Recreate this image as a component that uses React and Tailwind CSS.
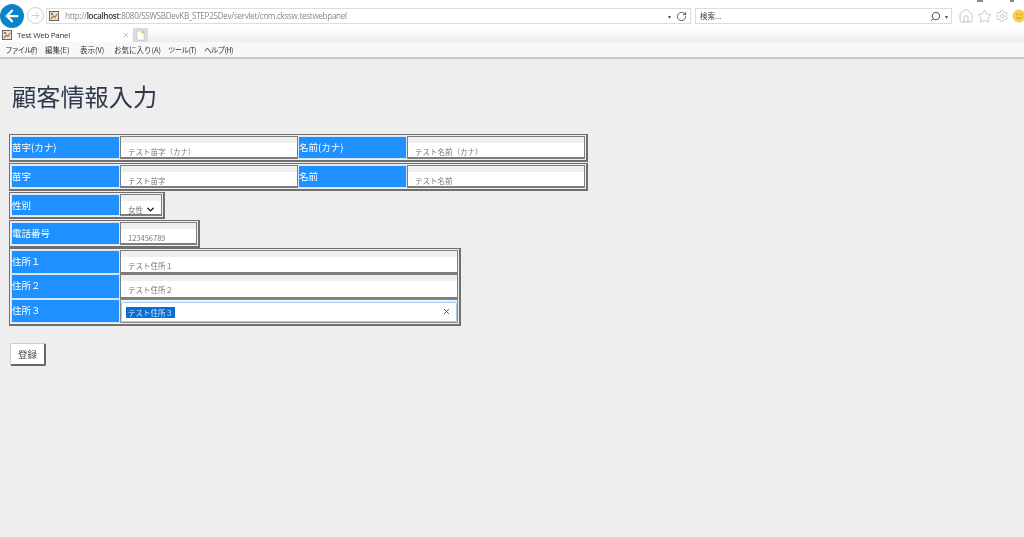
import React from "react";
import { ArrowLeft, ArrowRight, RotateCw, Search, Home, Star, Settings, X, ChevronDown } from "lucide-react";

const font = { fontFamily: '"Noto Sans CJK JP", "Noto Sans", sans-serif' };

function Favicon({ className = "" }) {
  return (
    <svg viewBox="0 0 10 10" className={`w-[10px] h-[10px] shrink-0 ${className}`}>
      <rect x="0.5" y="0.5" width="9" height="9" fill="#e8e4dc" stroke="#666" />
      <path d="M2 8 L4.5 5 L6 6.5 L8 3" fill="none" stroke="#c8742a" strokeWidth="1.3" />
      <rect x="2" y="2" width="2" height="2" fill="#777" />
    </svg>
  );
}

function Label({ children }) {
  return (
    <div className="w-[109px] shrink-0 h-full border border-[#d6e6f6] bg-[#1e90ff] text-white text-[9.5px] leading-[18px] pt-[1px]">
      {children}
    </div>
  );
}

function Input({ children, className = "" }) {
  return (
    <div className={`h-full border border-[#7d7d7d] border-b-2 flex flex-col bg-white ${className}`}>
      <div className="h-[6px] shrink-0 bg-[#efefef]" />
      <div className="flex-1 pl-[7px] pt-[3px] text-[7.5px] leading-[11px] text-[#777] whitespace-nowrap">{children}</div>
    </div>
  );
}

function Box({ className = "", children }) {
  return (
    <div className={`border border-[#6f6f6f] border-r-2 border-b-2 p-[1px] flex ${className}`}>{children}</div>
  );
}

const menu = [
  ["ファイル(F)", "w-[40px] tracking-[-1.1px]"],
  ["編集(E)", "w-[35px]"],
  ["表示(V)", "w-[34px]"],
  ["お気に入り(A)", "w-[54px]"],
  ["ツール(T)", "w-[36px] tracking-[-0.7px]"],
  ["ヘルプ(H)", "w-[40px] tracking-[-0.7px]"],
];

export default function App() {
  return (
    <div className="relative w-[1024px] h-[537px] overflow-hidden bg-[#eeeeee] flex flex-col blur-[0.35px]" style={font}>
      {/* window-control fragments at the very top edge */}
      <div className="absolute top-0 left-[977px] w-[6px] h-[2px] bg-[#888]" />
      <div className="absolute top-0 left-[1010px] w-[4px] h-[2px] bg-[#888]" />

      {/* address row */}
      <div className="h-[28px] shrink-0 bg-white flex items-center">
        <div className="w-[24px] h-[24px] rounded-full bg-[#0a84c6] flex items-center justify-center shrink-0 mt-[3px]">
          <ArrowLeft size={18} strokeWidth={3} color="#fff" />
        </div>
        <div className="w-[17px] h-[17px] ml-[3px] mt-[3px] rounded-full border border-[#cfcfcf] flex items-center justify-center shrink-0">
          <ArrowRight size={11} strokeWidth={1.5} color="#bbb" />
        </div>
        <div className="ml-[2px] mt-[4px] w-[645px] h-[16px] border border-[#dcdcdc] flex items-center pl-[2px] pr-[2px] shrink-0">
          <Favicon />
          <div className="ml-[6px] flex-1 text-[8.1px] tracking-[-0.3px] text-[#888] whitespace-nowrap" style={{ fontFamily: '"Open Sans", sans-serif' }}>
            http://<span className="text-[#333] font-semibold">localhost</span>:8080/SSWSBDevKB_STEP25Dev/servlet/com.ckssw.testwebpanel
          </div>
          <span className="text-[#555] text-[6px] mr-[5px]">▾</span>
          <RotateCw size={11} strokeWidth={1.8} color="#444" className="mr-[1px]" />
        </div>
        <div className="ml-[4px] mt-[4px] w-[257px] h-[16px] border border-[#dcdcdc] flex items-center pl-[4px] pr-[3px] shrink-0">
          <div className="flex-1 text-[7.5px] text-[#444]">検索...</div>
          <Search size={11} strokeWidth={2} color="#444" className="-scale-x-100 mr-[4px]" />
          <span className="text-[#555] text-[6px]">▾</span>
        </div>
        <div className="ml-[6px] mt-[4px] flex items-center gap-[3px] shrink-0">
          <Home size={16} strokeWidth={1} color="#a8a8a8" />
          <Star size={15} strokeWidth={1} color="#a8a8a8" />
          <Settings size={14} strokeWidth={1} color="#a8a8a8" />
          <svg viewBox="0 0 14 14" className="w-[14px] h-[14px]">
            <circle cx="7" cy="7" r="6.5" fill="#f4cf4e" />
            <circle cx="5" cy="5.5" r="0.7" fill="#b08a20" />
            <circle cx="9" cy="5.5" r="0.7" fill="#b08a20" />
            <path d="M4 8.5 Q7 11 10 8.5" fill="none" stroke="#b08a20" strokeWidth="0.7" />
          </svg>
        </div>
      </div>

      {/* tab row */}
      <div className="h-[14px] shrink-0 flex bg-gradient-to-b from-white to-[#eeeeee]">
        <div className="w-[132px] h-full bg-white flex items-center pl-[2px] pr-[2px]">
          <Favicon />
          <div className="ml-[5px] flex-1 text-[8px] tracking-[-0.3px] text-[#333] whitespace-nowrap" style={{ fontFamily: '"Open Sans", sans-serif' }}>Test Web Panel</div>
          <X size={8} strokeWidth={1.2} color="#666" />
        </div>
        <div className="ml-[1px] w-[15px] h-full bg-[#dcdcdc] flex items-center justify-center">
          <svg viewBox="0 0 10 12" className="w-[9px] h-[11px]">
            <path d="M1 1 H7 L9 3 V11 H1 Z" fill="#fff" stroke="#bbb" strokeWidth="0.7" />
            <circle cx="7.5" cy="2.5" r="1.5" fill="#eec04a" />
          </svg>
        </div>
      </div>

      {/* menu row */}
      <div className="h-[15px] shrink-0 bg-[#f8f8f8] flex items-center pl-[5px] text-[7.5px] text-[#333]">
        {menu.map(([m, c]) => (
          <div key={m} className={`${c} whitespace-nowrap`}>{m}</div>
        ))}
      </div>
      <div className="h-[2px] shrink-0 bg-[#c8c8c8]" />

      {/* page */}
      <div className="flex-1 pl-[9px] flex flex-col items-start">
        <h1 className="ml-[3px] mt-[19px] h-[36px] mb-[20px] text-[24.2px] leading-[36px] text-[#2f3a4f] whitespace-nowrap">顧客情報入力</h1>

        <Box className="w-[579px] h-[28px]">
          <Label>苗字(カナ)</Label>
          <Input className="w-[178px]">テスト苗字（カナ）</Input>
          <Label>名前(カナ)</Label>
          <Input className="w-[178px]">テスト名前（カナ）</Input>
        </Box>
        <Box className="w-[579px] h-[28px] mt-[1px]">
          <Label>苗字</Label>
          <Input className="w-[178px]">テスト苗字</Input>
          <Label>名前</Label>
          <Input className="w-[178px]">テスト名前</Input>
        </Box>
        <Box className="w-[156px] h-[27px] mt-[1px]">
          <Label>性別</Label>
          <Input className="w-[43px]">
            <div className="flex items-center">
              女性
              <ChevronDown size={11} strokeWidth={3} color="#111" className="ml-[2px]" />
            </div>
          </Input>
        </Box>
        <Box className="w-[191px] h-[28px] mt-[1px]">
          <Label>電話番号</Label>
          <Input className="w-[78px]">123456789</Input>
        </Box>
        <Box className="w-[452px] h-[78px] flex-col">
          <div className="h-[25px] flex">
            <Label>住所１</Label>
            <Input className="w-[339px]">テスト住所１</Input>
          </div>
          <div className="h-[25px] flex">
            <Label>住所２</Label>
            <Input className="w-[339px]">テスト住所２</Input>
          </div>
          <div className="h-[25px] flex">
            <Label>住所３</Label>
            <div className="w-[339px] h-full border border-[#8a8a8a] bg-[#efefef] pt-[2px]">
              <div className="h-[20px] border border-[#a6cdee] rounded-[2px] bg-white flex items-center pl-[4px] pr-[5px]">
                <span className="flex-1 min-w-0 text-[7.5px] leading-[10px] pt-[2px]">
                  <span className="bg-[#0a6ed1] text-[#cfe4fa] px-[2px]">テスト住所３</span>
                </span>
                <X size={9} strokeWidth={2.4} color="#555" />
              </div>
            </div>
          </div>
        </Box>

        <button className="ml-[1px] mt-[17px] w-[36px] h-[23px] bg-white border border-[#cfcfcf] border-r-2 border-b-2 border-r-[#666] border-b-[#666] rounded-[2px] text-[9.5px] text-[#444]">
          登録
        </button>
      </div>
    </div>
  );
}
